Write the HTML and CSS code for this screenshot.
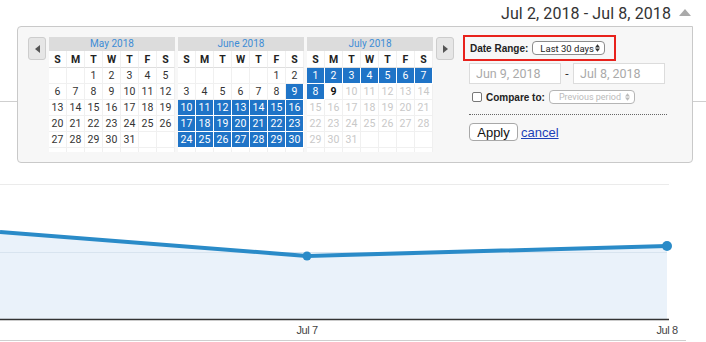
FILE: index.html
```html
<!DOCTYPE html>
<html>
  <head>
    <title>Date Range</title>
    <link rel="stylesheet" href="styles.css">
    <meta name="viewport" content="width=device-width, initial-scale=1">
    <meta charset="utf-8">
  </head>
  <body>
    <div id="page">
      <div id="range-bar">
        <span class="range-label">Jul 2, 2018 - Jul 8, 2018</span>
        <span class="range-caret"></span>
      </div>

      <div id="picker">
        <button class="nav-btn" title="Previous"><span class="tri tri-left"></span></button>

        <div class="month">
          <div class="month-title">May 2018</div>
          <div class="days">
            <span class="dn">S</span><span class="dn">M</span><span class="dn">T</span><span class="dn">W</span><span class="dn">T</span><span class="dn">F</span><span class="dn">S</span>
            <span></span><span></span><span>1</span><span>2</span><span>3</span><span>4</span><span>5</span>
            <span>6</span><span>7</span><span>8</span><span>9</span><span>10</span><span>11</span><span>12</span>
            <span>13</span><span>14</span><span>15</span><span>16</span><span>17</span><span>18</span><span>19</span>
            <span>20</span><span>21</span><span>22</span><span>23</span><span>24</span><span>25</span><span>26</span>
            <span>27</span><span>28</span><span>29</span><span>30</span><span>31</span><span></span><span></span>
            <span></span><span></span><span></span><span></span><span></span><span></span><span></span>
          </div>
        </div>

        <div class="month">
          <div class="month-title">June 2018</div>
          <div class="days">
            <span class="dn">S</span><span class="dn">M</span><span class="dn">T</span><span class="dn">W</span><span class="dn">T</span><span class="dn">F</span><span class="dn">S</span>
            <span></span><span></span><span></span><span></span><span></span><span>1</span><span>2</span>
            <span>3</span><span>4</span><span>5</span><span>6</span><span>7</span><span>8</span><span class="sel">9</span>
            <span class="sel">10</span><span class="sel">11</span><span class="sel">12</span><span class="sel">13</span><span class="sel">14</span><span class="sel">15</span><span class="sel">16</span>
            <span class="sel">17</span><span class="sel">18</span><span class="sel">19</span><span class="sel">20</span><span class="sel">21</span><span class="sel">22</span><span class="sel">23</span>
            <span class="sel">24</span><span class="sel">25</span><span class="sel">26</span><span class="sel">27</span><span class="sel">28</span><span class="sel">29</span><span class="sel">30</span>
            <span></span><span></span><span></span><span></span><span></span><span></span><span></span>
          </div>
        </div>

        <div class="month">
          <div class="month-title">July 2018</div>
          <div class="days">
            <span class="dn">S</span><span class="dn">M</span><span class="dn">T</span><span class="dn">W</span><span class="dn">T</span><span class="dn">F</span><span class="dn">S</span>
            <span class="sel">1</span><span class="sel">2</span><span class="sel">3</span><span class="sel">4</span><span class="sel">5</span><span class="sel">6</span><span class="sel">7</span>
            <span class="sel">8</span><span class="today">9</span><span class="off">10</span><span class="off">11</span><span class="off">12</span><span class="off">13</span><span class="off">14</span>
            <span class="off">15</span><span class="off">16</span><span class="off">17</span><span class="off">18</span><span class="off">19</span><span class="off">20</span><span class="off">21</span>
            <span class="off">22</span><span class="off">23</span><span class="off">24</span><span class="off">25</span><span class="off">26</span><span class="off">27</span><span class="off">28</span>
            <span class="off">29</span><span class="off">30</span><span class="off">31</span><span></span><span></span><span></span><span></span>
            <span></span><span></span><span></span><span></span><span></span><span></span><span></span>
          </div>
        </div>

        <button class="nav-btn" title="Next"><span class="tri tri-right"></span></button>

        <div class="range-form">
          <div class="range-type">
            <span class="form-label">Date Range:</span>
            <span class="fake-select">Last 30 days
              <svg width="5" height="8" viewBox="0 0 6 9"><path d="M0 3.8L3 0l3 3.8zM0 5.2L3 9l3-3.8z" fill="#333"/></svg>
            </span>
          </div>
          <div class="date-inputs">
            <input class="date-input" type="text" value="Jun 9, 2018">
            <span class="date-dash">-</span>
            <input class="date-input" type="text" value="Jul 8, 2018">
          </div>
          <div class="compare-row">
            <input class="cmp-check" type="checkbox">
            <span class="form-label">Compare to:</span>
            <span class="fake-select disabled">Previous period
              <svg width="5" height="8" viewBox="0 0 6 9"><path d="M0 3.8L3 0l3 3.8zM0 5.2L3 9l3-3.8z" fill="#bbb"/></svg>
            </span>
          </div>
          <div class="form-rule"></div>
          <div class="form-actions">
            <button class="apply-btn">Apply</button>
            <a href="#" class="cancel-link">cancel</a>
          </div>
        </div>
      </div>

      <div id="chart-section">
        <svg class="chart" width="706" height="240" viewBox="0 0 706 240">
          <line x1="0" y1="82.5" x2="669" y2="82.5" stroke="#ebebeb"/>
          <polygon points="0,130 307,154 667,144 667,217 0,217" fill="#eaf2fa"/>
          <line x1="0" y1="150.5" x2="667" y2="150.5" stroke="#d8e4ef"/>
          <line x1="0" y1="217.5" x2="669" y2="217.5" stroke="#333" stroke-width="1.3"/>
          <polyline points="0,130 307,154 667,144" fill="none" stroke="#2a8bc8" stroke-width="4" stroke-linejoin="round"/>
          <circle cx="307" cy="154" r="4.5" fill="#2a8bc8"/>
          <circle cx="667" cy="144" r="5" fill="#2a8bc8"/>
          <text x="307" y="232" text-anchor="middle" class="axis-label">Jul 7</text>
          <text x="667" y="232" text-anchor="middle" class="axis-label">Jul 8</text>
          <line x1="0" y1="238.5" x2="686" y2="238.5" stroke="#cfcfcf"/>
        </svg>
      </div>
    </div>
  </body>
</html>
```

FILE: styles.css
```css
body {
  margin: 0;
  font-family: 'Roboto', 'Liberation Sans', sans-serif;
  color: #333;
  background: #fff;
}
#page {
  position: relative;
  width: 706px;
  height: 342px;
  overflow: hidden;
}
#range-bar {
  height: 26px;
  display: flex;
  justify-content: flex-end;
  align-items: center;
  padding-right: 15px;
}
.range-label {
  font-size: 16px;
  color: #333;
  letter-spacing: 0.1px;
}
.range-caret {
  margin-left: 8px;
  width: 0;
  height: 0;
  border-left: 6.5px solid transparent;
  border-right: 6.5px solid transparent;
  border-bottom: 7px solid #aaa;
  margin-bottom: 1px;
}

/* dropdown panel */
#picker {
  position: absolute;
  top: 26px;
  left: 17px;
  z-index: 2;
  box-sizing: border-box;
  width: 676px;
  padding: 10px;
  display: flex;
  align-items: flex-start;
  gap: 3px;
  background: #f7f7f7;
  border: 1px solid #c9c9c9;
  border-radius: 4px 0 4px 4px;
}
.nav-btn {
  box-sizing: border-box;
  width: 18px;
  height: 23px;
  padding: 0;
  display: flex;
  align-items: center;
  justify-content: center;
  background: #e6e6e6;
  border: 1px solid #cdcdcd;
  border-radius: 3px;
}
.tri {
  width: 0;
  height: 0;
  border-top: 4px solid transparent;
  border-bottom: 4px solid transparent;
}
.tri-left {
  border-right: 5px solid #555;
}
.tri-right {
  border-left: 5px solid #555;
}
.month {
  width: 126px;
  height: 115px;
  overflow: hidden;
}
.month-title {
  height: 14px;
  line-height: 14px;
  background: #dcdcdc;
  color: #3d8cd6;
  font-size: 10px;
  text-align: center;
}
.days {
  display: grid;
  grid-template-columns: repeat(7, 18px);
  grid-template-rows: 17px;
  grid-auto-rows: 16px;
  background: #fff;
}
.days span {
  box-sizing: border-box;
  border-right: 1px solid #f0f0f0;
  border-bottom: 1px solid #f0f0f0;
  font-size: 10.5px;
  line-height: 16px;
  text-align: center;
  color: #333;
}
.days .dn {
  font-weight: bold;
  color: #222;
  line-height: 17px;
  border-bottom-color: #dedede;
}
.days .sel {
  background: #1f74c7;
  color: #fff;
  border-color: #fff;
}
.days .today {
  font-weight: bold;
  color: #111;
}
.days .off {
  color: #c8c8c8;
}

/* range form */
.range-form {
  margin-left: 6px;
  margin-top: -2px;
  display: flex;
  flex-direction: column;
  align-items: flex-start;
}
.range-type {
  display: flex;
  align-items: center;
  gap: 4px;
  height: 22px;
  padding: 0 9px 0 5px;
  border: 2px solid #e8221c;
}
.form-label {
  font-family: 'Liberation Sans', Arial, sans-serif;
  font-size: 10px;
  font-weight: bold;
  color: #222;
  white-space: nowrap;
}
.fake-select {
  box-sizing: border-box;
  display: flex;
  align-items: center;
  justify-content: space-between;
  width: 73px;
  height: 14px;
  padding: 0 4px 0 7px;
  background: #fff;
  border: 1px solid #8c8c8c;
  border-radius: 4px;
  font-size: 9.5px;
  color: #222;
  white-space: nowrap;
}
.fake-select svg {
  flex-shrink: 0;
}
.fake-select.disabled {
  width: 86px;
  height: 14px;
  padding: 0 4px 0 9px;
  border-color: #b5b5b5;
  color: #bbb;
  font-size: 9px;
}
.date-inputs {
  display: flex;
  align-items: center;
  margin-top: 2px;
  padding-left: 6px;
}
.date-input {
  box-sizing: border-box;
  width: 92px;
  height: 21px;
  margin: 0;
  padding: 0 6px;
  border: 1px solid #dcdcdc;
  background: #fff;
  font-family: 'Roboto', sans-serif;
  font-size: 12.5px;
  color: #aaa;
}
.date-dash {
  width: 12px;
  text-align: center;
  font-size: 12px;
  color: #333;
}
.compare-row {
  display: flex;
  align-items: center;
  gap: 4px;
  margin-top: 6px;
  padding-left: 9px;
  height: 14px;
}
.cmp-check {
  appearance: none;
  box-sizing: border-box;
  width: 10px;
  height: 10px;
  margin: 0;
  border: 1px solid #777;
  border-radius: 2px;
  background: #fff;
}
.form-rule {
  width: 198px;
  margin-top: 10px;
  margin-left: 6px;
  border-top: 1px dotted #666;
}
.form-actions {
  display: flex;
  align-items: center;
  margin-top: 8px;
  padding-left: 6px;
  gap: 3px;
}
.apply-btn {
  box-sizing: border-box;
  width: 49px;
  height: 18px;
  padding: 0;
  background: #fff;
  border: 1px solid #a8a8a8;
  border-radius: 4px;
  font-family: 'Liberation Sans', Arial, sans-serif;
  font-size: 13px;
  color: #111;
}
.cancel-link {
  font-family: 'Liberation Sans', Arial, sans-serif;
  font-size: 13px;
  color: #1d3fb8;
}

/* chart */
#chart-section {
  margin-top: 75px;
  border-top: 1px solid #cfcfcf;
}
.chart {
  display: block;
}
.axis-label {
  font-family: 'Liberation Sans', Arial, sans-serif;
  font-size: 11px;
  fill: #444;
  letter-spacing: -0.4px;
}
```
